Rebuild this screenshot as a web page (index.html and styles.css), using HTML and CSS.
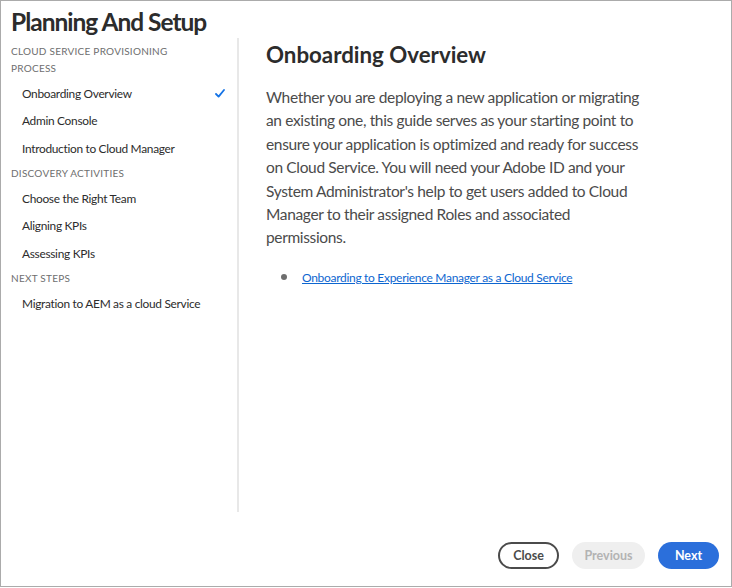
FILE: index.html
```html
<!DOCTYPE html>
<html>
<head>
<meta charset="utf-8">
<link rel="stylesheet" href="styles.css">
</head>
<body>
<div class="frame">
  <h1 class="title">Planning And Setup</h1>
  <div class="body">
    <aside class="sidebar">
      <div class="group-label">Cloud Service Provisioning Process</div>
      <div class="item active"><span>Onboarding Overview</span>
        <svg class="check" width="10" height="9" viewBox="0 0 10 9"><path d="M1 5 L3.6 7.6 L9 1" fill="none" stroke="#1473e6" stroke-width="1.8" stroke-linecap="round" stroke-linejoin="round"/></svg>
      </div>
      <div class="item">Admin Console</div>
      <div class="item">Introduction to Cloud Manager</div>
      <div class="group-label">Discovery Activities</div>
      <div class="item">Choose the Right Team</div>
      <div class="item">Aligning KPIs</div>
      <div class="item">Assessing KPIs</div>
      <div class="group-label">Next Steps</div>
      <div class="item">Migration to AEM as a cloud Service</div>
    </aside>
    <main class="content">
      <h2 class="heading">Onboarding Overview</h2>
      <p class="text">Whether you are deploying a new application or migrating an existing one, this guide serves as your starting point to ensure your application is optimized and ready for success on Cloud Service. You will need your Adobe ID and your System Administrator's help to get users added to Cloud Manager to their assigned Roles and associated permissions.</p>
      <ul class="links">
        <li><a href="#">Onboarding to Experience Manager as a Cloud Service</a></li>
      </ul>
    </main>
  </div>
  <footer class="footer">
    <button class="btn btn-close">Close</button>
    <button class="btn btn-prev" disabled>Previous</button>
    <button class="btn btn-next">Next</button>
  </footer>
</div>
</body>
</html>
```

FILE: styles.css
```css
html, body {
  margin: 0;
  padding: 0;
  background: #ffffff;
}
body {
  font-family: Lato, "Open Sans", sans-serif;
  color: #2c2c2c;
}
.frame {
  width: 732px;
  height: 587px;
  box-sizing: border-box;
  border: 1px solid #ababab;
  display: flex;
  flex-direction: column;
}
.title {
  margin: 0;
  padding: 6px 0 0 10px;
  font-size: 24.5px;
  font-weight: 700;
  letter-spacing: -1px;
  line-height: 30px;
  color: #2c2c2c;
  height: 31px;
}
.body {
  display: flex;
  height: 474px;
}
.sidebar {
  width: 238px;
  flex: none;
  border-right: 2px solid #e8e8e8;
  padding: 1.75px 0 0 10px;
  box-sizing: border-box;
}
.group-label {
  text-transform: uppercase;
  font-size: 10px;
  letter-spacing: 0.25px;
  color: #6e6e6e;
  line-height: 17px;
  width: 160px;
  margin: 2.75px 0;
}
.item {
  display: flex;
  align-items: center;
  justify-content: space-between;
  font-size: 11.9px;
  letter-spacing: -0.3px;
  color: #2c2c2c;
  padding-left: 11px;
  padding-right: 12px;
  height: 27.5px;
}
.check {
  display: block;
}
.content {
  padding: 3px 0 0 27px;
  flex: 1;
}
.heading {
  margin: 0;
  font-size: 22.3px;
  font-weight: 700;
  line-height: 28px;
  color: #2c2c2c;
}
.text {
  margin: 17px 0 0 0;
  width: 376px;
  font-size: 15.5px;
  letter-spacing: -0.35px;
  line-height: 23.4px;
  color: #4b4b4b;
}
.links {
  list-style: none;
  margin: 20px 0 0 0;
  padding-left: 15px;
}
.links li {
  display: flex;
  align-items: center;
  gap: 15px;
  font-size: 12px;
  letter-spacing: -0.3px;
}
.links li::before {
  content: "";
  width: 6px;
  height: 6px;
  border-radius: 50%;
  background: #6e6e6e;
  flex: none;
}
.links a {
  color: #0d66d0;
}
.footer {
  flex: 1;
  display: flex;
  justify-content: flex-end;
  align-items: center;
  gap: 13px;
  padding-right: 12px;
  padding-top: 13px;
}
.btn {
  font-family: Lato, "Open Sans", sans-serif;
  font-size: 12.5px;
  font-weight: 700;
  height: 27px;
  border-radius: 14px;
  padding: 0;
  border: 2px solid transparent;
  box-sizing: border-box;
}
.btn-close {
  background: #fff;
  border-color: #4b4b4b;
  color: #4b4b4b;
  width: 61px;
}
.btn-prev {
  background: #efefef;
  color: #b3b3b3;
  width: 73px;
}
.btn-next {
  background: #2b6fdb;
  color: #fff;
  width: 61px;
}
```
